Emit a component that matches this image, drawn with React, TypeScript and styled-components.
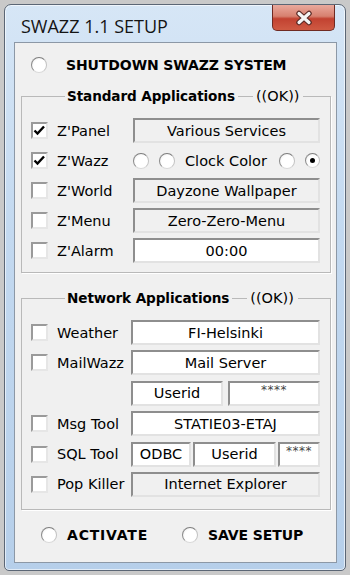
import React from "react";
import styled, { createGlobalStyle } from "styled-components";

const GlobalStyle = createGlobalStyle`
  html, body {
    margin: 0;
    padding: 0;
    background: #c9c9c9;
  }
  #root {
    width: 350px;
    height: 575px;
    overflow: hidden;
  }
`;

const Window = styled.div`
  box-sizing: border-box;
  margin: 4px 0 0 4px;
  width: 342px;
  height: 567px;
  border: 1px solid #5b6675;
  border-radius: 7px 7px 5px 5px;
  background: linear-gradient(180deg, #d6e6f6 0%, #c3d9f0 40%, #b6cfea 100%);
  box-shadow: inset 0 0 0 1px rgba(255, 255, 255, 0.6);
  display: flex;
  flex-direction: column;
  padding: 0 8px 7px 9px;
`;

const TitleBar = styled.div`
  height: 37px;
  display: flex;
  align-items: flex-start;
  justify-content: space-between;
`;

const Title = styled.div`
  font-family: "Open Sans", "DejaVu Sans", sans-serif;
  font-size: 18px;
  color: #141414;
  margin: 9px 0 0 7px;
  line-height: 24px;
`;

const CloseButton = styled.div`
  box-sizing: border-box;
  width: 63px;
  height: 26px;
  margin-right: 2px;
  border: 1px solid #6f2a22;
  border-top: none;
  border-radius: 0 0 5px 5px;
  background: linear-gradient(180deg, #e9a99d 0%, #d7806f 45%, #c24231 55%, #cf5a43 100%);
  display: flex;
  align-items: center;
  justify-content: center;
`;

const Client = styled.div`
  flex: 1;
  box-sizing: border-box;
  border: 1px solid #8c98a6;
  background: #f0f0f0;
  font-family: "DejaVu Sans", sans-serif;
  font-size: 14.5px;
  color: #000;
  padding: 12px 5px 0 6px;
  display: flex;
  flex-direction: column;
`;

const OptionRow = styled.div<{ $indent: number; $gap: number; $space?: number }>`
  display: flex;
  align-items: center;
  height: 20px;
  margin-top: ${(p) => p.$space ?? 0}px;
  padding-left: ${(p) => p.$indent}px;
  gap: ${(p) => p.$gap}px;
`;

const BoldText = styled.span<{ $spread?: number }>`
  font-weight: bold;
  font-size: 14px;
  letter-spacing: ${(p) => p.$spread ?? -0.1}px;
  white-space: nowrap;
`;

const LegendTitle = styled(BoldText)`
  font-size: 13.6px;
`;

const Radio = styled.span<{ $checked?: boolean; $push?: number }>`
  box-sizing: border-box;
  flex-shrink: 0;
  width: ${(p) => (p.$checked ? 15 : 16)}px;
  height: ${(p) => (p.$checked ? 15 : 16)}px;
  margin-left: ${(p) => p.$push ?? 0}px;
  border-radius: 50%;
  border: 1px solid;
  border-color: #7d7d7d #c2c2c2 #dadada #8a8a8a;
  background: radial-gradient(circle at 60% 60%, #ffffff 55%, #e4e4e4 100%);
  display: flex;
  align-items: center;
  justify-content: center;
  &::after {
    content: "";
    display: ${(p) => (p.$checked ? "block" : "none")};
    width: 5px;
    height: 5px;
    border-radius: 50%;
    background: #000;
  }
`;

const Group = styled.fieldset<{ $top: number; $bottom: number; $space: number }>`
  margin: ${(p) => p.$space}px 0 0 0;
  padding: ${(p) => p.$top}px 10px ${(p) => p.$bottom}px 9px;
  border: 1px solid #b9b9b9;
  box-shadow: 1px 1px 0 #ffffff;
  min-width: 0;
`;

const Legend = styled.legend`
  margin-left: 34px;
  padding: 0 4px 0 2px;
  line-height: 17px;
  display: flex;
  align-items: center;
`;

const LegendLine = styled.span`
  display: inline-block;
  width: 15px;
  height: 1px;
  background: #b9b9b9;
  margin: 0 3px 0 3px;
`;

const LegendOk = styled.span`
  font-size: 14.5px;
`;

const Rows = styled.div<{ $gap: number }>`
  display: flex;
  flex-direction: column;
  gap: ${(p) => p.$gap}px;
`;

const Row = styled.div<{ $label: number }>`
  display: grid;
  grid-template-columns: 17px ${(p) => p.$label}px 1fr;
  column-gap: 9px;
  align-items: center;
  height: 25px;
`;

const CheckBox = styled.span`
  box-sizing: border-box;
  width: 17px;
  height: 17px;
  background: #fff;
  border: 2px solid;
  border-color: #9a9a9a #e6e6e6 #e6e6e6 #9a9a9a;
  display: flex;
  align-items: center;
  justify-content: center;
`;

const Label = styled.span`
  white-space: nowrap;
`;

const Field = styled.div<{ $white?: boolean }>`
  box-sizing: border-box;
  height: 25px;
  min-width: 0;
  border: 2px solid;
  border-color: #8e8e8e #e2e2e2 #e2e2e2 #8e8e8e;
  background: ${(p) => (p.$white ? "#ffffff" : "#f0f0f0")};
  display: flex;
  align-items: center;
  justify-content: center;
  overflow: hidden;
  white-space: nowrap;
`;

const Stars = styled.span`
  font-size: 12px;
  color: #444;
  margin-top: -6px;
  letter-spacing: 0.5px;
`;

const FieldSet = styled.div<{ $gap: number; $cols: string }>`
  display: grid;
  grid-template-columns: ${(p) => p.$cols};
  column-gap: ${(p) => p.$gap}px;
`;

const ClockRow = styled.div`
  display: flex;
  align-items: center;
  gap: 10px;
`;

const ClockText = styled.span`
  margin-right: 2px;
  white-space: nowrap;
`;

const Tick = () => (
  <svg width="13" height="13" viewBox="0 0 13 13">
    <path d="M1.5 6.5 L4.5 9.5 L11 2.5" fill="none" stroke="#000" strokeWidth="2.4" />
  </svg>
);

const CloseIcon = () => (
  <svg width="20" height="16" viewBox="0 0 20 16">
    <path d="M5 3.5 L15 12.5 M15 3.5 L5 12.5" stroke="#5a2a25" strokeWidth="5.5" strokeLinecap="round" />
    <path d="M5 3.5 L15 12.5 M15 3.5 L5 12.5" stroke="#f4f4f4" strokeWidth="3.2" strokeLinecap="round" />
  </svg>
);

type Item = { label: string; checked?: boolean; field: React.ReactNode };

const Check = ({ on }: { on?: boolean }) => <CheckBox>{on && <Tick />}</CheckBox>;

const standard: Item[] = [
  { label: "Z'Panel", checked: true, field: <Field>Various Services</Field> },
  {
    label: "Z'Wazz",
    checked: true,
    field: (
      <ClockRow>
        <Radio $checked={false} />
        <Radio />
        <ClockText>Clock Color</ClockText>
        <Radio />
        <Radio $checked />
      </ClockRow>
    ),
  },
  { label: "Z'World", field: <Field>Dayzone Wallpaper</Field> },
  { label: "Z'Menu", field: <Field>Zero-Zero-Menu</Field> },
  { label: "Z'Alarm", field: <Field $white>00:00</Field> },
];

const App = () => {
  return (
    <>
      <GlobalStyle />
      <Window>
        <TitleBar>
          <Title>SWAZZ 1.1 SETUP</Title>
          <CloseButton>
            <CloseIcon />
          </CloseButton>
        </TitleBar>
        <Client>
          <OptionRow $indent={10} $gap={19}>
            <Radio />
            <BoldText>SHUTDOWN SWAZZ SYSTEM</BoldText>
          </OptionRow>

          <Group $space={13} $top={13} $bottom={9}>
            <Legend>
              <LegendTitle>Standard Applications</LegendTitle>
              <LegendLine />
              <LegendOk>((OK))</LegendOk>
            </Legend>
            <Rows $gap={5}>
              {standard.map((it) => (
                <Row key={it.label} $label={67}>
                  <Check on={it.checked} />
                  <Label>{it.label}</Label>
                  {it.field}
                </Row>
              ))}
            </Rows>
          </Group>

          <Group $space={17} $top={13} $bottom={12}>
            <Legend>
              <LegendTitle>Network Applications</LegendTitle>
              <LegendLine />
              <LegendOk>((OK))</LegendOk>
            </Legend>
            <Rows $gap={5.4}>
              <Row $label={65}>
                <Check />
                <Label>Weather</Label>
                <Field $white>FI-Helsinki</Field>
              </Row>
              <Row $label={65}>
                <Check />
                <Label>MailWazz</Label>
                <Field $white>Mail Server</Field>
              </Row>
              <Row $label={65}>
                <span />
                <span />
                <FieldSet $gap={5} $cols="1fr 1fr">
                  <Field $white>Userid</Field>
                  <Field $white>
                    <Stars>****</Stars>
                  </Field>
                </FieldSet>
              </Row>
              <Row $label={65}>
                <Check />
                <Label>Msg Tool</Label>
                <Field $white>STATIE03-ETAJ</Field>
              </Row>
              <Row $label={65}>
                <Check />
                <Label>SQL Tool</Label>
                <FieldSet $gap={2} $cols="60px 83px 1fr">
                  <Field $white>ODBC</Field>
                  <Field $white>Userid</Field>
                  <Field $white>
                    <Stars>****</Stars>
                  </Field>
                </FieldSet>
              </Row>
              <Row $label={65}>
                <Check />
                <Label>Pop Killer</Label>
                <Field>Internet Explorer</Field>
              </Row>
            </Rows>
          </Group>

          <OptionRow $indent={20} $gap={10} $space={15}>
            <Radio />
            <BoldText $spread={0.8}>ACTIVATE</BoldText>
            <Radio $push={24} />
            <BoldText>SAVE SETUP</BoldText>
          </OptionRow>
        </Client>
      </Window>
    </>
  );
};

export default App;
